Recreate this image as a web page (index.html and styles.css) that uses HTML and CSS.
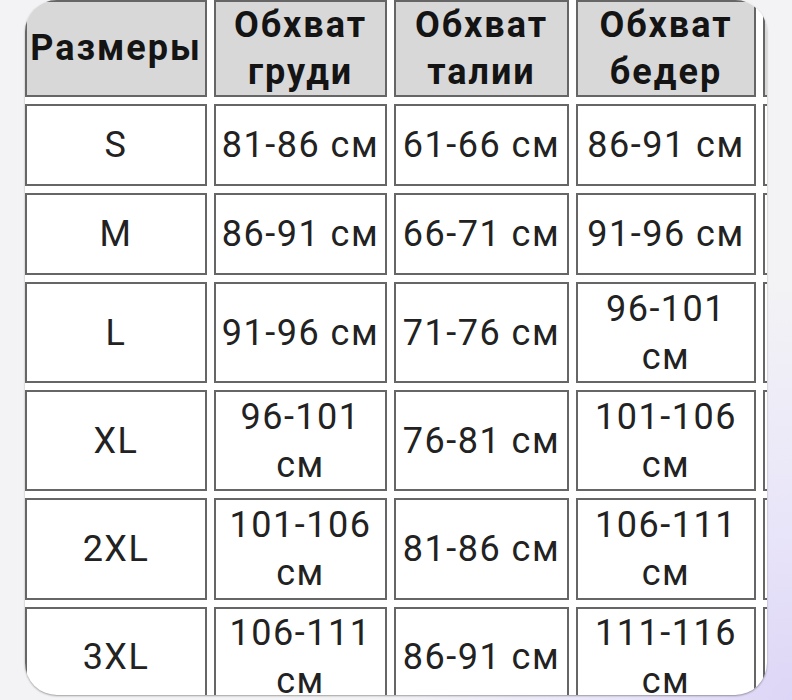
FILE: index.html
```html
<!DOCTYPE html>
<html lang="ru">
<head>
<meta charset="utf-8">
<title>Размеры</title>
<link rel="stylesheet" href="styles.css">
</head>
<body>
<div class="card">
  <div class="grid">
    <div class="cell head">Размеры</div>
    <div class="cell head">Обхват<br>груди</div>
    <div class="cell head">Обхват<br>талии</div>
    <div class="cell head">Обхват<br>бедер</div>
    <div class="cell head"></div>

    <div class="cell">S</div>
    <div class="cell">81-86 см</div>
    <div class="cell">61-66 см</div>
    <div class="cell">86-91 см</div>
    <div class="cell"></div>

    <div class="cell">M</div>
    <div class="cell">86-91 см</div>
    <div class="cell">66-71 см</div>
    <div class="cell">91-96 см</div>
    <div class="cell"></div>

    <div class="cell">L</div>
    <div class="cell">91-96 см</div>
    <div class="cell">71-76 см</div>
    <div class="cell">96-101<br>см</div>
    <div class="cell"></div>

    <div class="cell">XL</div>
    <div class="cell">96-101<br>см</div>
    <div class="cell">76-81 см</div>
    <div class="cell">101-106<br>см</div>
    <div class="cell"></div>

    <div class="cell">2XL</div>
    <div class="cell">101-106<br>см</div>
    <div class="cell">81-86 см</div>
    <div class="cell">106-111<br>см</div>
    <div class="cell"></div>

    <div class="cell">3XL</div>
    <div class="cell">106-111<br>см</div>
    <div class="cell">86-91 см</div>
    <div class="cell">111-116<br>см</div>
    <div class="cell"></div>
  </div>
</div>
</body>
</html>
```

FILE: styles.css
```css
html, body {
  margin: 0;
  padding: 0;
}
body {
  width: 792px;
  height: 700px;
  overflow: hidden;
  background:
    radial-gradient(circle at 100% 100%, #ddd6f6 0, #e9e5f9 180px, rgba(244,243,248,0) 420px),
    #f3f3f5;
  font-family: Roboto, "Noto Sans", sans-serif;
}
.card {
  margin-left: 25px;
  width: 742px;
  height: 695px;
  background: #fff;
  border-radius: 32px;
  overflow: hidden;
  box-shadow: 0 1px 2px rgba(0,0,0,0.35);
}
.grid {
  display: grid;
  grid-template-columns: 182px 173px 175px 180px 100px;
  grid-template-rows: 97px 82px 82px 101px 101px 102px 100px;
  gap: 7px;
}
.cell {
  box-sizing: border-box;
  border: 2px solid #666;
  display: flex;
  align-items: center;
  justify-content: center;
  text-align: center;
  font-size: 36px;
  line-height: 48px;
  letter-spacing: 1.5px;
  color: #222;
  white-space: nowrap;
}
.head {
  background: #d8d8d8;
  font-weight: 700;
  font-size: 36px;
  line-height: 47px;
  letter-spacing: 2px;
  color: #141414;
}
```
